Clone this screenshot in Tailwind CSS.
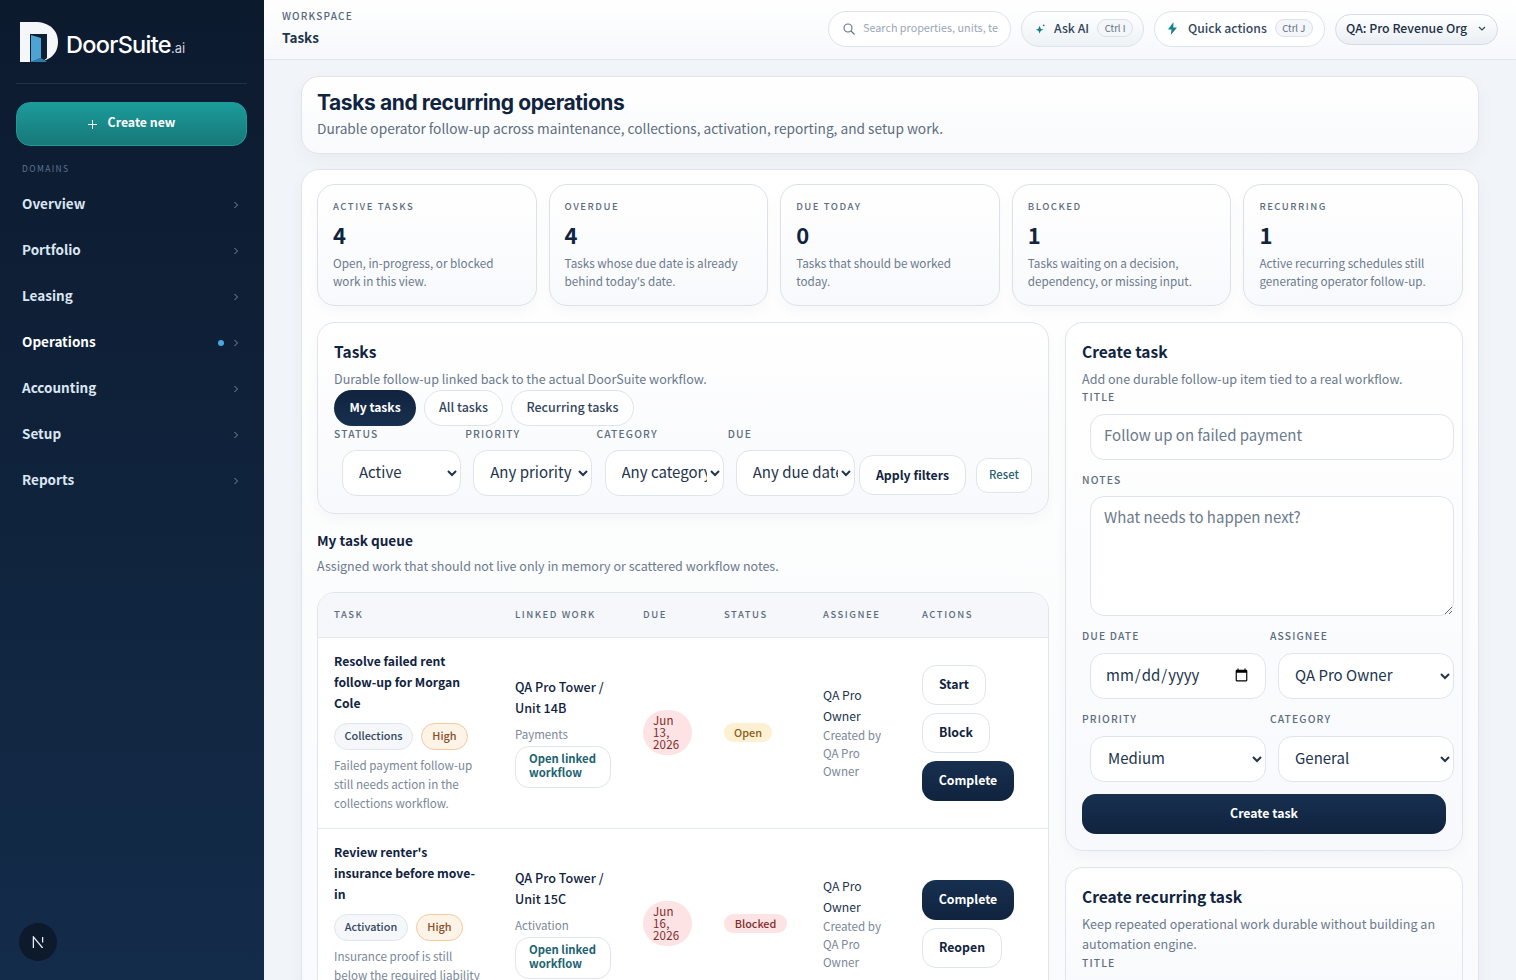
<!DOCTYPE html>
<html lang="en">
<head>
  <meta charset="UTF-8" />
  <title>Tasks - DoorSuite.ai</title>
  <script src="https://cdn.jsdelivr.net/npm/@tailwindcss/browser@4"></script>
</head>
<body class="h-screen overflow-hidden flex bg-[#f1f4f8] text-[#10233f] font-['Noto_Sans_CJK_SC','Noto_Sans',sans-serif]">

  <!-- Sidebar -->
  <aside class="w-[264px] shrink-0 h-full flex flex-col bg-gradient-to-b from-[#0c1a2e] to-[#132c4a] pl-4 pr-[17px]">
    <div class="h-[84px] shrink-0 border-b border-white/10 flex items-center gap-2 pl-1 pt-[1px]">
      <svg class="w-[38px] h-[40px]" viewBox="0 0 38 40">
        <path fill="#f4f6f9" d="M0 0H15C29 0 38 8 38 20S29 40 15 40H0Z"/>
        <path fill="#0f2036" d="M10 12H27V36L22 40H10Z"/>
        <path fill="#4fa3d4" d="M11 13L21 16V36L11 40Z"/>
        <path fill="#2b7fa8" d="M11 40L21 36L27 40Z"/>
      </svg>
      <div class="mt-[5px] text-white text-[23.500px] leading-none font-medium tracking-[-0.7px] font-['Inter',sans-serif]">DoorSuite<span class="text-[13px] font-normal tracking-normal text-[#cdd6e0]">.ai</span></div>
    </div>
    <button class="mt-[18px] h-[44px] pb-[3px] rounded-[14px] border border-[#1f9a9a] bg-gradient-to-b from-[#1c9b9b] to-[#177878] text-white text-[12.300px] font-semibold flex items-center justify-center gap-[11px]">
      <svg class="w-[9px] h-[9px] mt-[3px]" viewBox="0 0 10 10" fill="none" stroke="currentColor" stroke-width="1.100"><path d="M5 0v10M0 5h10"/></svg>
      Create new
    </button>
    <div class="mt-[17px] pl-[6px] text-[8.500px] leading-[11px] tracking-[0.16em] text-[#5d7391]">DOMAINS</div>
    <nav class="mt-[6px] flex flex-col">
      <a class="h-[46px] pl-[6px] pr-[9px] flex items-center justify-between text-[13.500px] font-semibold text-[#dbe6f2]">Overview <svg class="w-[4px] h-[8px] mt-[4px]" viewBox="0 0 4 8" fill="none" stroke="#7a8a9c"><path d="M.5 1l3 3-3 3"/></svg></a>
      <a class="h-[46px] pl-[6px] pr-[9px] flex items-center justify-between text-[13.500px] font-semibold text-[#dbe6f2]">Portfolio <svg class="w-[4px] h-[8px] mt-[4px]" viewBox="0 0 4 8" fill="none" stroke="#7a8a9c"><path d="M.5 1l3 3-3 3"/></svg></a>
      <a class="h-[46px] pl-[6px] pr-[9px] flex items-center justify-between text-[13.500px] font-semibold text-[#dbe6f2]">Leasing <svg class="w-[4px] h-[8px] mt-[4px]" viewBox="0 0 4 8" fill="none" stroke="#7a8a9c"><path d="M.5 1l3 3-3 3"/></svg></a>
      <a class="h-[46px] pl-[6px] pr-[9px] flex items-center justify-between text-[13.500px] font-semibold text-white">Operations
        <span class="flex items-center gap-[10px] mt-[4px]"><span class="w-[6px] h-[6px] rounded-full bg-[#4aa8e0]"></span><svg class="w-[4px] h-[8px]" viewBox="0 0 4 8" fill="none" stroke="#7a8a9c"><path d="M.5 1l3 3-3 3"/></svg></span></a>
      <a class="h-[46px] pl-[6px] pr-[9px] flex items-center justify-between text-[13.500px] font-semibold text-[#dbe6f2]">Accounting <svg class="w-[4px] h-[8px] mt-[4px]" viewBox="0 0 4 8" fill="none" stroke="#7a8a9c"><path d="M.5 1l3 3-3 3"/></svg></a>
      <a class="h-[46px] pl-[6px] pr-[9px] flex items-center justify-between text-[13.500px] font-semibold text-[#dbe6f2]">Setup <svg class="w-[4px] h-[8px] mt-[4px]" viewBox="0 0 4 8" fill="none" stroke="#7a8a9c"><path d="M.5 1l3 3-3 3"/></svg></a>
      <a class="h-[46px] pl-[6px] pr-[9px] flex items-center justify-between text-[13.500px] font-semibold text-[#dbe6f2]">Reports <svg class="w-[4px] h-[8px] mt-[4px]" viewBox="0 0 4 8" fill="none" stroke="#7a8a9c"><path d="M.5 1l3 3-3 3"/></svg></a>
    </nav>
    <div class="mt-auto mb-[19px] ml-[3px] w-[38px] h-[38px] rounded-full bg-[#0d1a2c] flex items-center justify-center">
      <svg class="w-[12px] h-[12px]" viewBox="0 0 13 13" fill="none" stroke="#e8edf3" stroke-width="1.400"><path d="M1.500 13V1L11.500 13M11.500 1V7"/></svg>
    </div>
  </aside>

  <div class="flex-1 min-w-0 h-full flex flex-col">
    <!-- Topbar -->
    <header class="h-[60px] shrink-0 bg-gradient-to-b from-white to-[#f6f8fb] border-b border-[#dfe5ec] px-[18px] flex items-center justify-between">
      <div class="pb-[3px]">
        <div class="text-[10px] leading-[12px] tracking-[0.12em] font-medium text-[#55677d]">WORKSPACE</div>
        <div class="mt-[5px] text-[13.500px] leading-[20px] font-semibold text-[#22344c]">Tasks</div>
      </div>
      <div class="flex items-center gap-[10px] pb-[1px]">
        <div class="w-[183px] h-[36px] pb-[3px] rounded-full border border-[#dde3ea] bg-white flex items-center pl-[14px] gap-[8px] overflow-hidden">
          <svg class="w-[12px] h-[12px] shrink-0 mt-[2px] text-[#5f7085]" viewBox="0 0 12 12" fill="none" stroke="currentColor" stroke-width="1.100"><circle cx="5" cy="5" r="4"/><path d="M8 8l3.500 3.500"/></svg>
          <span class="text-[10.800px] text-[#9aa7b5] whitespace-nowrap overflow-hidden w-[135px]">Search properties, units, te</span>
        </div>
        <button class="w-[123px] h-[36px] pb-[2px] rounded-full border border-[#dde3ea] bg-gradient-to-b from-white to-[#edf2f6] flex items-center pl-[13px] text-[12.300px] font-medium text-[#33465d]">
          <svg class="w-[11px] h-[11px] mr-[8px]" viewBox="0 0 12 12" fill="#16808a"><path d="M5 3l1.300 3.200L9 7.300 6.300 8.400 5 11.500 3.700 8.400 1 7.300l2.700-1.100z"/><circle cx="9.500" cy="2.500" r="1" fill="#2a6fa8"/></svg>
          Ask AI
          <span class="ml-[8px] h-[18px] w-[36px] rounded-full border border-[#dbe2e9] bg-[#f4f6f9] text-[9.500px] leading-[16px] font-normal text-[#5c6d81]">Ctrl I</span>
        </button>
        <button class="w-[171px] h-[36px] pb-[2px] rounded-full border border-[#dde3ea] bg-white flex items-center pl-[13px] text-[12.200px] font-medium text-[#33465d]">
          <svg class="w-[9px] h-[13px] mr-[11px]" viewBox="0 0 9 13" fill="#16808a"><path d="M5.500 0L0 7.500h3.500L2.800 13 9 5.500H5.300z"/></svg>
          Quick actions
          <span class="ml-[8px] h-[18px] w-[38px] rounded-full border border-[#dbe2e9] bg-[#f4f6f9] text-[9.500px] leading-[16px] font-normal text-[#5c6d81]">Ctrl J</span>
        </button>
        <button class="w-[163px] h-[31px] pb-[2px] rounded-full border border-[#d5dce4] bg-gradient-to-b from-white to-[#eaeff4] flex items-center pl-[10px] text-[12.300px] font-medium text-[#1c2f47]">
          QA: Pro Revenue Org
          <svg class="w-[8px] h-[5px] ml-[11px]" viewBox="0 0 8 5" fill="none" stroke="#33465d" stroke-width="1.200"><path d="M1 1l3 3 3-3"/></svg>
        </button>
      </div>
    </header>

    <!-- Content -->
    <main class="flex-1 min-h-0 overflow-hidden px-[37px] pt-[16px]">
      <section class="h-[78px] rounded-[18px] border border-[#dfe5ec] bg-gradient-to-b from-white to-[#f9fafc] shadow-[0_6px_18px_rgba(16,35,63,0.04)] px-[15px] pt-[12px]">
        <h1 class="text-[21px] leading-[28px] font-bold tracking-[-0.4px] text-[#10233f] font-['Inter',sans-serif]">Tasks and recurring operations</h1>
        <p class="text-[13.700px] leading-[22px] text-[#5d6d80]">Durable operator follow-up across maintenance, collections, activation, reporting, and setup work.</p>
      </section>

      <section class="mt-[15px] rounded-[18px] border border-[#dfe5ec] bg-gradient-to-b from-white to-[#f9fafc] shadow-[0_6px_18px_rgba(16,35,63,0.04)] px-[15px] pt-[14px] pb-8">
        <!-- Stat cards -->
        <div class="grid grid-cols-5 gap-[12px]">
          <div class="h-[122px] rounded-[18px] border border-[#dbe1e9] bg-gradient-to-b from-white to-[#f8f9fc] shadow-[0_6px_14px_rgba(16,35,63,0.03)] px-[15px] pt-[14px]">
            <div class="text-[9.500px] leading-[14px] tracking-[0.16em] font-medium text-[#5d6d80]">ACTIVE TASKS</div>
            <div class="mt-[5px] text-[22px] leading-[32px] font-semibold text-[#10233f]">4</div>
            <p class="mt-[4px] text-[11.700px] leading-[18px] text-[#6b7a8d]">Open, in-progress, or blocked work in this view.</p>
          </div>
          <div class="h-[122px] rounded-[18px] border border-[#dbe1e9] bg-gradient-to-b from-white to-[#f8f9fc] shadow-[0_6px_14px_rgba(16,35,63,0.03)] px-[15px] pt-[14px]">
            <div class="text-[9.500px] leading-[14px] tracking-[0.16em] font-medium text-[#5d6d80]">OVERDUE</div>
            <div class="mt-[5px] text-[22px] leading-[32px] font-semibold text-[#10233f]">4</div>
            <p class="mt-[4px] text-[11.700px] leading-[18px] text-[#6b7a8d]">Tasks whose due date is already behind today's date.</p>
          </div>
          <div class="h-[122px] rounded-[18px] border border-[#dbe1e9] bg-gradient-to-b from-white to-[#f8f9fc] shadow-[0_6px_14px_rgba(16,35,63,0.03)] px-[15px] pt-[14px]">
            <div class="text-[9.500px] leading-[14px] tracking-[0.16em] font-medium text-[#5d6d80]">DUE TODAY</div>
            <div class="mt-[5px] text-[22px] leading-[32px] font-semibold text-[#10233f]">0</div>
            <p class="mt-[4px] text-[11.700px] leading-[18px] text-[#6b7a8d]">Tasks that should be worked today.</p>
          </div>
          <div class="h-[122px] rounded-[18px] border border-[#dbe1e9] bg-gradient-to-b from-white to-[#f8f9fc] shadow-[0_6px_14px_rgba(16,35,63,0.03)] px-[15px] pt-[14px]">
            <div class="text-[9.500px] leading-[14px] tracking-[0.16em] font-medium text-[#5d6d80]">BLOCKED</div>
            <div class="mt-[5px] text-[22px] leading-[32px] font-semibold text-[#10233f]">1</div>
            <p class="mt-[4px] text-[11.700px] leading-[18px] text-[#6b7a8d]">Tasks waiting on a decision, dependency, or missing input.</p>
          </div>
          <div class="h-[122px] rounded-[18px] border border-[#dbe1e9] bg-gradient-to-b from-white to-[#f8f9fc] shadow-[0_6px_14px_rgba(16,35,63,0.03)] px-[15px] pt-[14px]">
            <div class="text-[9.500px] leading-[14px] tracking-[0.16em] font-medium text-[#5d6d80]">RECURRING</div>
            <div class="mt-[5px] text-[22px] leading-[32px] font-semibold text-[#10233f]">1</div>
            <p class="mt-[4px] text-[11.700px] leading-[18px] text-[#6b7a8d]">Active recurring schedules still generating operator follow-up.</p>
          </div>
        </div>

        <div class="mt-[16px] flex gap-[16px] items-start">
          <!-- Left column -->
          <div class="w-[732px] shrink-0">
            <div class="h-[192px] rounded-[18px] border border-[#dfe5ec] bg-gradient-to-b from-white to-[#f8f9fc] shadow-[0_6px_14px_rgba(16,35,63,0.03)] pl-[16px] pt-[16px]">
              <h2 class="text-[15.500px] leading-[24px] font-semibold text-[#10233f]">Tasks</h2>
              <p class="mt-[6px] text-[12.550px] leading-[20px] text-[#6b7a8d]">Durable follow-up linked back to the actual DoorSuite workflow.</p>
              <div class="mt-[1px] flex gap-[8px]">
                <button class="h-[36px] w-[82px] pb-[1px] rounded-full bg-gradient-to-b from-[#10233f] to-[#17304f] text-white text-[12.100px] font-semibold">My tasks</button>
                <button class="h-[36px] w-[79px] pb-[1px] rounded-full border border-[#dfe5ec] bg-white text-[12.500px] font-medium text-[#33465d]">All tasks</button>
                <button class="h-[36px] w-[123px] pb-[1px] rounded-full border border-[#dfe5ec] bg-white text-[12.500px] font-medium text-[#33465d]">Recurring tasks</button>
              </div>
              <div class="mt-[1px] flex items-end gap-[4px]">
                <label class="w-[127.250px] block">
                  <span class="block text-[10.300px] leading-[14px] tracking-[0.11em] font-medium text-[#5d6d80]">STATUS</span>
                  <select class="mt-[9px] ml-[8px] w-[119px] h-[46px] pb-[4px] rounded-[14px] border border-[#dfe5ec] bg-white pl-[12px] text-[15px] text-[#22344c]"><option>Active</option></select>
                </label>
                <label class="w-[127.250px] block">
                  <span class="block text-[10.300px] leading-[14px] tracking-[0.11em] font-medium text-[#5d6d80]">PRIORITY</span>
                  <select class="mt-[9px] ml-[8px] w-[119px] h-[46px] pb-[4px] rounded-[14px] border border-[#dfe5ec] bg-white pl-[12px] text-[15px] text-[#22344c]"><option>Any priority</option></select>
                </label>
                <label class="w-[127.250px] block">
                  <span class="block text-[10.300px] leading-[14px] tracking-[0.11em] font-medium text-[#5d6d80]">CATEGORY</span>
                  <select class="mt-[9px] ml-[8px] w-[119px] h-[46px] pb-[4px] rounded-[14px] border border-[#dfe5ec] bg-white pl-[12px] text-[15px] text-[#22344c]"><option>Any category</option></select>
                </label>
                <label class="w-[127.250px] block">
                  <span class="block text-[10.300px] leading-[14px] tracking-[0.11em] font-medium text-[#5d6d80]">DUE</span>
                  <select class="mt-[9px] ml-[8px] w-[119px] h-[46px] pb-[4px] rounded-[14px] border border-[#dfe5ec] bg-white pl-[12px] text-[15px] text-[#22344c]"><option>Any due date</option></select>
                </label>
                <button class="mb-[1px] h-[40px] w-[107px] rounded-[14px] border border-[#dfe5ec] bg-white text-[12.300px] font-semibold text-[#10233f]">Apply filters</button>
                <button class="ml-[6px] mb-[3px] h-[35px] w-[56px] pb-[2px] rounded-[12px] border border-[#dfe5ec] bg-white text-[11.300px] font-medium text-[#2a6170]">Reset</button>
              </div>
            </div>

            <h3 class="mt-[15px] text-[13.600px] leading-[22px] font-semibold text-[#10233f]">My task queue</h3>
            <p class="mt-[5px] text-[12.500px] leading-[20px] text-[#6b7a8d]">Assigned work that should not live only in memory or scattered workflow notes.</p>

            <div class="mt-[16px] rounded-[18px] border border-[#dfe5ec] bg-white overflow-hidden">
              <table class="w-full table-fixed text-left">
                <colgroup><col class="w-[181px]"/><col class="w-[128px]"/><col class="w-[81px]"/><col class="w-[99px]"/><col class="w-[99px]"/><col/></colgroup>
                <thead class="bg-[#f5f7fa] border-b border-[#e4e9ef]">
                  <tr class="h-[44px] text-[9.500px] tracking-[0.16em] text-[#5d6d80]">
                    <th class="pl-[16px] pb-[2px] font-medium">TASK</th><th class="pl-[16px] pb-[2px] font-medium">LINKED WORK</th><th class="pl-[16px] pb-[2px] font-medium">DUE</th><th class="pl-[16px] pb-[2px] font-medium">STATUS</th><th class="pl-[16px] pb-[2px] font-medium">ASSIGNEE</th><th class="pl-[16px] pb-[2px] font-medium">ACTIONS</th>
                  </tr>
                </thead>
                <tbody>
                  <tr class="h-[191px] border-b border-[#e4e9ef]">
                    <td class="pl-[16px] align-top pt-[13px]">
                      <div class="w-[143px] text-[12.200px] leading-[21px] font-semibold text-[#10233f]">Resolve failed rent follow-up for Morgan Cole</div>
                      <div class="mt-[9px] flex gap-[8px]">
                        <span class="h-[27px] w-[79px] rounded-full border border-[#e0e5eb] bg-[#f5f7fa] text-[10.900px] leading-[22px] font-medium text-center text-[#33465d]">Collections</span>
                        <span class="h-[27px] w-[47px] rounded-full border border-[#f3c9a0] bg-[#fdf3e7] text-[10.900px] leading-[22px] font-medium text-center text-[#8a4f2a]">High</span>
                      </div>
                      <p class="mt-[5px] w-[148px] text-[11.650px] leading-[19px] text-[#7a8899]">Failed payment follow-up still needs action in the collections workflow.</p>
                    </td>
                    <td class="pl-[16px] pr-[10px] pb-[2px]">
                      <div class="text-[12.600px] leading-[21px] font-medium text-[#10233f]">QA Pro Tower / Unit 14B</div>
                      <div class="mt-[7px] text-[11.500px] leading-[18px] text-[#7a8899]">Payments</div>
                      <button class="mt-[3px] block w-[96px] h-[42px] pb-[3px] rounded-[14px] border border-[#dfe5ec] bg-white text-left pl-[13px] text-[11.300px] leading-[14px] font-semibold text-[#1c6373]">Open linked workflow</button>
                    </td>
                    <td class="pl-[16px]">
                      <span class="block w-[49px] h-[45px] rounded-full bg-[#fde3e3] pl-[10px] text-[11.500px] leading-[12px] pt-[4px] tracking-[0.2px] text-[#7f2b2b]">Jun 13, 2026</span>
                    </td>
                    <td class="pl-[16px]">
                      <span class="block w-[48px] h-[19px] rounded-full bg-[#fdf0d3] text-center text-[10.800px] leading-[18px] font-medium text-[#8a5a14]">Open</span>
                    </td>
                    <td class="pl-[16px] pr-[8px]">
                      <div class="text-[12.200px] leading-[21px] text-[#22344c]">QA Pro Owner</div>
                      <div class="-mt-[1px] text-[11.600px] leading-[18px] text-[#7a8899]">Created by QA Pro Owner</div>
                    </td>
                    <td class="pl-[16px]">
                      <div class="flex flex-col items-start gap-[8px]">
                        <button class="h-[40px] w-[64px] pb-[1px] rounded-[14px] border border-[#dfe5ec] bg-white text-[12.300px] font-semibold text-[#10233f]">Start</button>
                        <button class="h-[40px] w-[68px] pb-[1px] rounded-[14px] border border-[#dfe5ec] bg-white text-[12.300px] font-semibold text-[#10233f]">Block</button>
                        <button class="h-[40px] w-[92px] pb-[1px] rounded-[14px] bg-gradient-to-b from-[#17304f] to-[#10233f] text-white text-[12.300px] font-semibold">Complete</button>
                      </div>
                    </td>
                  </tr>
                  <tr class="h-[191px]">
                    <td class="pl-[16px] align-top pt-[13px]">
                      <div class="w-[143px] text-[12.200px] leading-[21px] font-semibold text-[#10233f]">Review renter's insurance before move-in</div>
                      <div class="mt-[9px] flex gap-[8px]">
                        <span class="h-[27px] w-[74px] rounded-full border border-[#e0e5eb] bg-[#f5f7fa] text-[10.900px] leading-[22px] font-medium text-center text-[#33465d]">Activation</span>
                        <span class="h-[27px] w-[47px] rounded-full border border-[#f3c9a0] bg-[#fdf3e7] text-[10.900px] leading-[22px] font-medium text-center text-[#8a4f2a]">High</span>
                      </div>
                      <p class="mt-[5px] w-[148px] text-[11.650px] leading-[19px] text-[#7a8899]">Insurance proof is still below the required liability limit.</p>
                    </td>
                    <td class="pl-[16px] pr-[10px] pb-[2px]">
                      <div class="text-[12.600px] leading-[21px] font-medium text-[#10233f]">QA Pro Tower / Unit 15C</div>
                      <div class="mt-[7px] text-[11.500px] leading-[18px] text-[#7a8899]">Activation</div>
                      <button class="mt-[3px] block w-[96px] h-[42px] pb-[3px] rounded-[14px] border border-[#dfe5ec] bg-white text-left pl-[13px] text-[11.300px] leading-[14px] font-semibold text-[#1c6373]">Open linked workflow</button>
                    </td>
                    <td class="pl-[16px]">
                      <span class="block w-[49px] h-[45px] rounded-full bg-[#fde3e3] pl-[10px] text-[11.500px] leading-[12px] pt-[4px] tracking-[0.2px] text-[#7f2b2b]">Jun 16, 2026</span>
                    </td>
                    <td class="pl-[16px]">
                      <span class="block w-[63px] h-[19px] rounded-full bg-[#fde3e3] text-center text-[10.800px] leading-[18px] font-medium text-[#7f2b2b]">Blocked</span>
                    </td>
                    <td class="pl-[16px] pr-[8px]">
                      <div class="text-[12.200px] leading-[21px] text-[#22344c]">QA Pro Owner</div>
                      <div class="-mt-[1px] text-[11.600px] leading-[18px] text-[#7a8899]">Created by QA Pro Owner</div>
                    </td>
                    <td class="pl-[16px]">
                      <div class="flex flex-col items-start gap-[8px]">
                        <button class="h-[40px] w-[92px] pb-[1px] rounded-[14px] bg-gradient-to-b from-[#17304f] to-[#10233f] text-white text-[12.300px] font-semibold">Complete</button>
                        <button class="h-[40px] w-[80px] pb-[1px] rounded-[14px] border border-[#dfe5ec] bg-white text-[12.300px] font-semibold text-[#10233f]">Reopen</button>
                      </div>
                    </td>
                  </tr>
                </tbody>
              </table>
            </div>
          </div>

          <!-- Right column -->
          <div class="w-[398px] shrink-0 flex flex-col gap-[16px]">
            <div class="h-[529px] rounded-[18px] border border-[#dfe5ec] bg-gradient-to-b from-white to-[#f8f9fc] shadow-[0_6px_14px_rgba(16,35,63,0.03)] pl-[16px] pt-[16px]">
              <h2 class="text-[15.500px] leading-[24px] font-semibold text-[#10233f]">Create task</h2>
              <p class="mt-[6px] text-[12.550px] leading-[20px] text-[#6b7a8d]">Add one durable follow-up item tied to a real workflow.</p>
              <label class="block mt-[1px]">
                <span class="block text-[10.300px] leading-[14px] tracking-[0.11em] font-medium text-[#5d6d80]">TITLE</span>
                <input class="mt-[10px] ml-[8px] block w-[364px] h-[46px] pb-[6px] rounded-[14px] border border-[#dfe5ec] bg-white px-[13px] text-[15px] placeholder:text-[#6b7a8d]" placeholder="Follow up on failed payment"/>
              </label>
              <label class="block mt-[13px]">
                <span class="block text-[10.300px] leading-[14px] tracking-[0.11em] font-medium text-[#5d6d80]">NOTES</span>
                <textarea class="mt-[9px] ml-[8px] block w-[364px] h-[120px] rounded-[14px] border border-[#dfe5ec] bg-white px-[13px] py-[8px] text-[15px] leading-[24px] placeholder:text-[#6b7a8d]" placeholder="What needs to happen next?"></textarea>
              </label>
              <div class="mt-[13px] grid grid-cols-[188px_188px] items-start">
                <label class="block">
                  <span class="block text-[10.300px] leading-[14px] tracking-[0.11em] font-medium text-[#5d6d80]">DUE DATE</span>
                  <input type="date" class="mt-[10px] ml-[8px] block w-[176px] h-[46px] pb-[2px] rounded-[14px] border border-[#dfe5ec] bg-white px-[14px] text-[15px] text-[#22344c]"/>
                </label>
                <label class="block">
                  <span class="block text-[10.300px] leading-[14px] tracking-[0.11em] font-medium text-[#5d6d80]">ASSIGNEE</span>
                  <select class="mt-[10px] ml-[8px] block w-[176px] h-[46px] pb-[4px] rounded-[14px] border border-[#dfe5ec] bg-white pl-[12px] text-[15px] text-[#22344c]"><option>QA Pro Owner</option></select>
                </label>
                <label class="block mt-[13px]">
                  <span class="block text-[10.300px] leading-[14px] tracking-[0.11em] font-medium text-[#5d6d80]">PRIORITY</span>
                  <select class="mt-[10px] ml-[8px] block w-[176px] h-[46px] pb-[4px] rounded-[14px] border border-[#dfe5ec] bg-white pl-[13px] text-[15px] text-[#22344c]"><option>Medium</option></select>
                </label>
                <label class="block mt-[13px]">
                  <span class="block text-[10.300px] leading-[14px] tracking-[0.11em] font-medium text-[#5d6d80]">CATEGORY</span>
                  <select class="mt-[10px] ml-[8px] block w-[176px] h-[46px] pb-[4px] rounded-[14px] border border-[#dfe5ec] bg-white pl-[12px] text-[15px] text-[#22344c]"><option>General</option></select>
                </label>
              </div>
              <button class="mt-[12px] block w-[364px] h-[40px] pb-[1px] rounded-[14px] bg-gradient-to-b from-[#17304f] to-[#10233f] text-white text-[12.300px] font-semibold">Create task</button>
            </div>
            <div class="rounded-[18px] border border-[#dfe5ec] bg-gradient-to-b from-white to-[#f8f9fc] px-[16px] pt-[16px] pb-8">
              <h2 class="text-[15.500px] leading-[24px] font-semibold text-[#10233f]">Create recurring task</h2>
              <p class="mt-[6px] text-[12.550px] leading-[20px] text-[#6b7a8d]">Keep repeated operational work durable without building an automation engine.</p>
              <span class="block mt-[2px] text-[10.300px] leading-[14px] tracking-[0.11em] font-medium text-[#5d6d80]">TITLE</span>
            </div>
          </div>
        </div>
      </section>
    </main>
  </div>
</body>
</html>
